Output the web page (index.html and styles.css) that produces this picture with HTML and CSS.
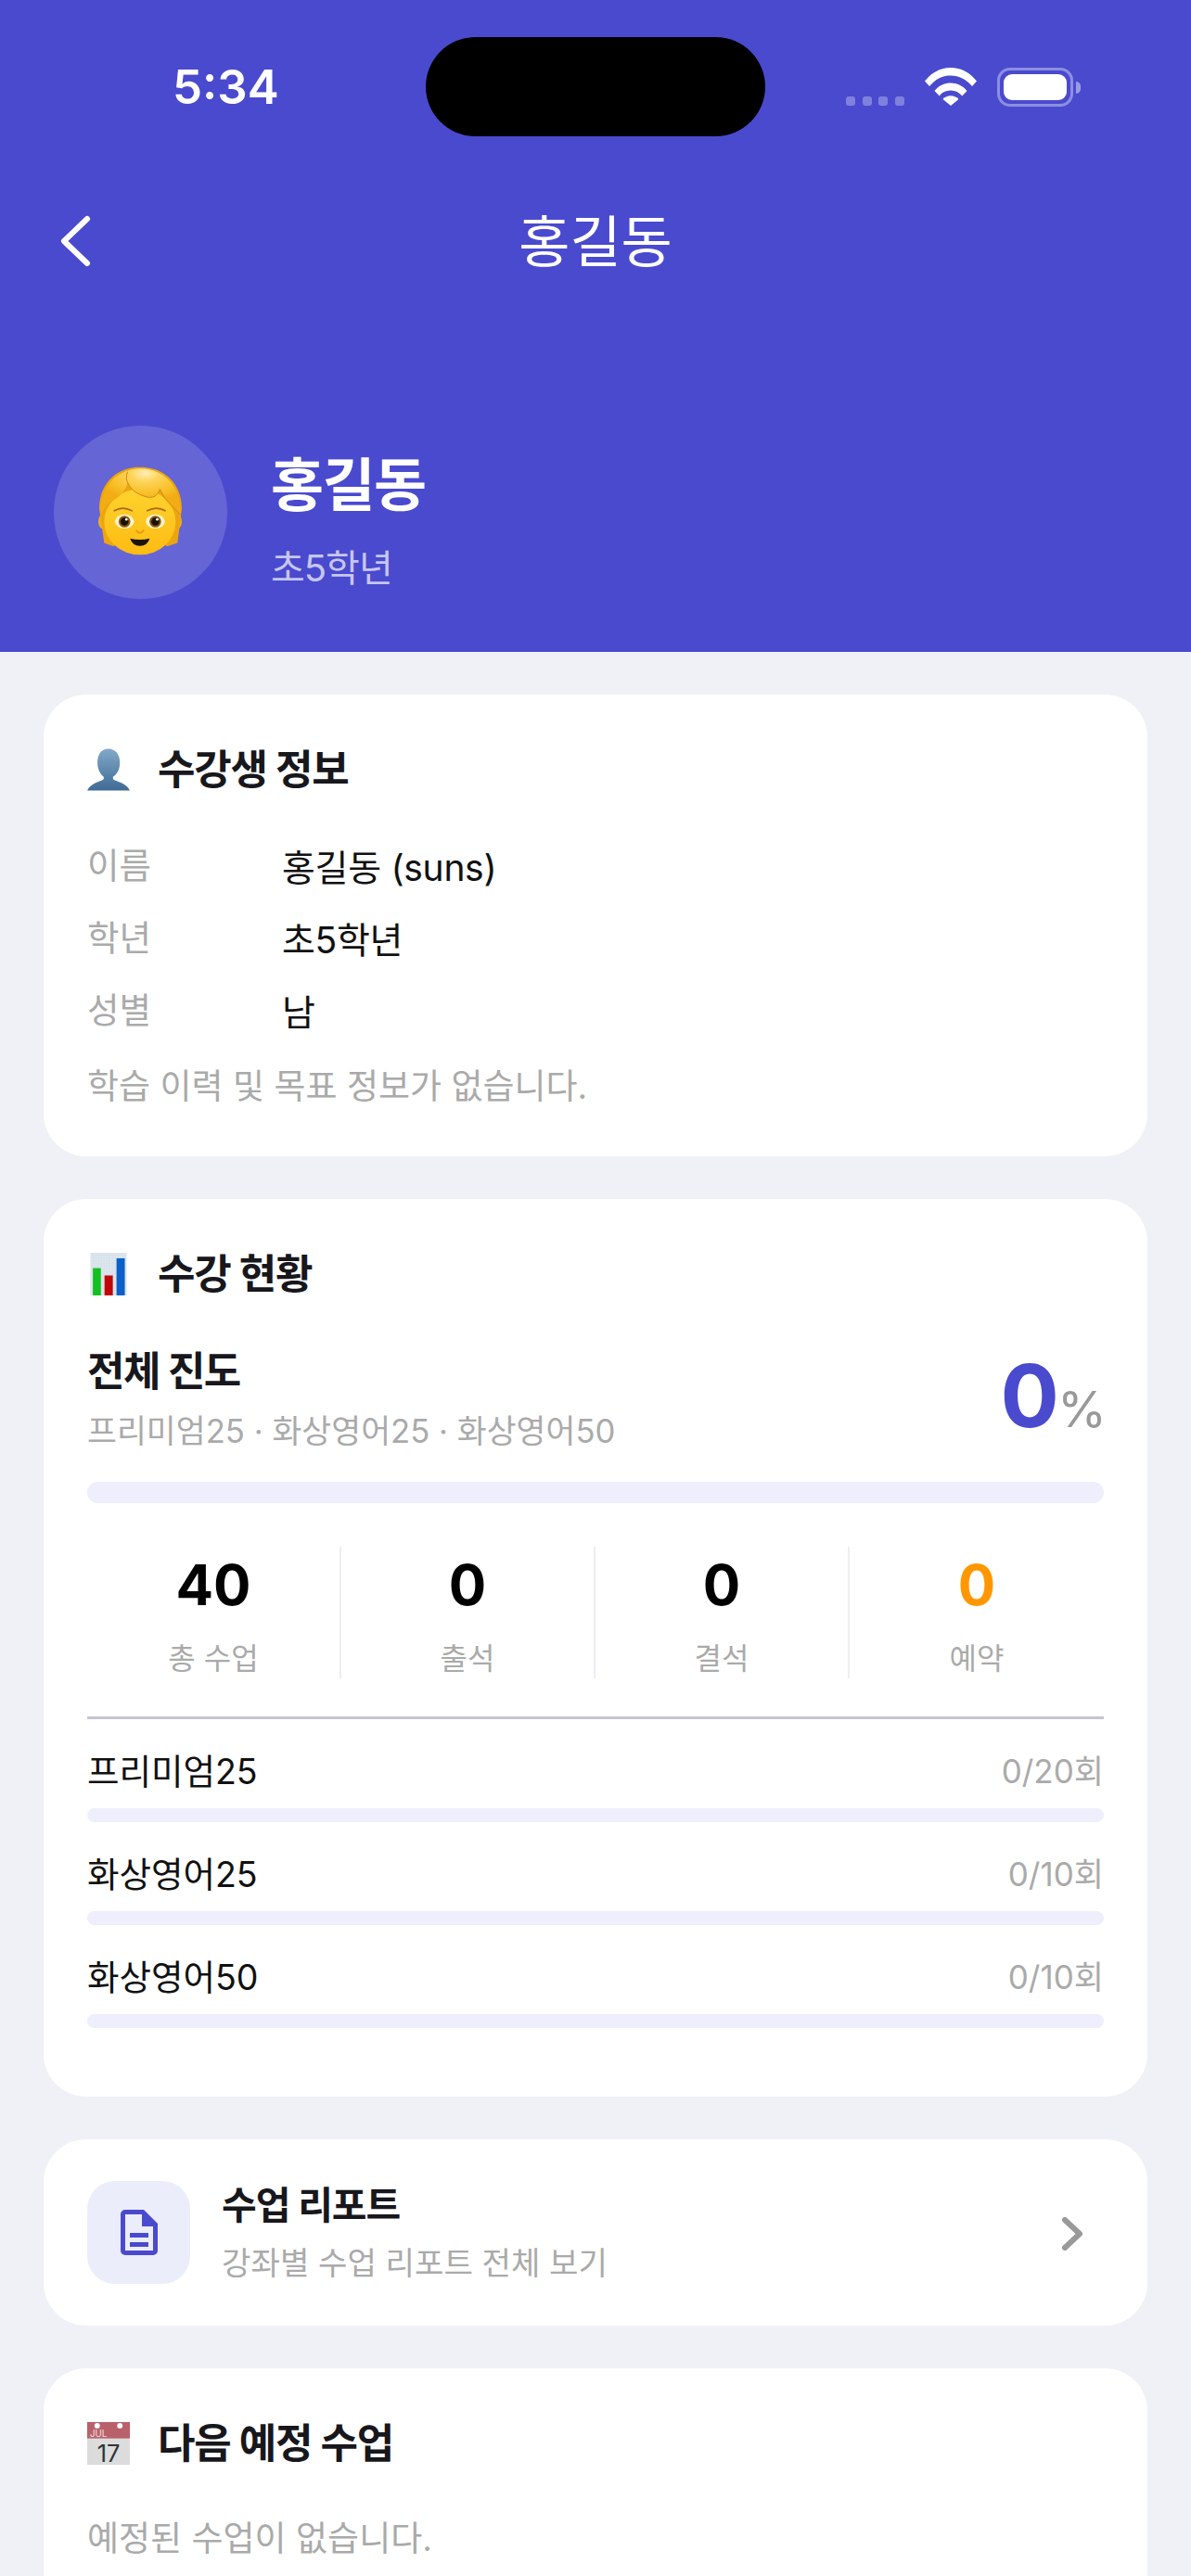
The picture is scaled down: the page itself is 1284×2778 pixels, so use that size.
FILE: index.html
```html
<!DOCTYPE html>
<html lang="ko">
<head>
    <meta charset="UTF-8">
    <meta name="viewport" content="width=device-width, initial-scale=1.0">
    <title>홍길동</title>
    <link rel="stylesheet" href="styles.css">
</head>
<body>
    <div class="screen">
        <header class="hero">
            <!-- Status bar -->
            <div class="status-bar">
                <span class="clock">5:34</span>
                <div class="island"></div>
                <div class="status-icons">
                    <div class="signal"><i></i><i></i><i></i><i></i></div>
                    <svg class="wifi" viewBox="0 0 56 41">
                        <path d="M0 14.500C7.500 5 17 0 28 0s20.500 5 28 14.500l-5 5.500C44.500 12.500 37 8.500 28 8.500S11.500 12.500 5 20z" fill="#fff"/>
                        <path d="M10.500 25C15 19.500 21 16.500 28 16.500s13 3 17.500 8.500l-5.200 5.500C37 26.500 33 24.500 28 24.500s-9 2-12.300 6z" fill="#fff"/>
                        <path d="M19.500 34c2.300-2.500 5.200-3.700 8.500-3.700s6.200 1.200 8.500 3.700L28 41z" fill="#fff"/>
                    </svg>
                    <div class="battery"><div class="battery-fill"></div></div>
                    <div class="battery-nub"></div>
                </div>
            </div>

            <!-- Nav -->
            <div class="nav">
                <svg class="back" viewBox="0 0 34 56">
                    <path d="M30 4 L5 28 L30 52" fill="none" stroke="#fff" stroke-width="6" stroke-linecap="round" stroke-linejoin="round"/>
                </svg>
                <h1 class="nav-title">홍길동</h1>
            </div>

            <!-- Profile -->
            <div class="profile">
                <div class="avatar">
                    <svg class="face" viewBox="200 185 280 295">
                        <defs>
                            <radialGradient id="hairGrad" cx="0.56" cy="0.1" r="0.62">
                                <stop offset="0" stop-color="#ffeeb4"/>
                                <stop offset="0.3" stop-color="#fdd45a"/>
                                <stop offset="0.7" stop-color="#f8c02a"/>
                                <stop offset="1" stop-color="#f2ac14"/>
                            </radialGradient>
                            <linearGradient id="skinGrad" x1="0" y1="0" x2="0" y2="1">
                                <stop offset="0" stop-color="#ffd22e"/>
                                <stop offset="1" stop-color="#fdbb12"/>
                            </linearGradient>
                        </defs>
                        <ellipse cx="217" cy="367" rx="14" ry="24" fill="#f4ae18"/>
                        <ellipse cx="460" cy="367" rx="14" ry="24" fill="#f4ae18"/>
                        <path d="M340 190C262 188 206 245 206 325L222 436 252 448 300 400H380L425 448 460 436 474 325C474 245 418 190 340 190Z" fill="#eda50f"/>
                        <ellipse cx="338" cy="368" rx="116" ry="107" fill="url(#skinGrad)"/>
                        <path d="M211 345C205 255 262 196 340 195C418 196 475 255 469 345C455 325 425 310 403 262C395 285 380 292 360 287C335 280 310 268 298 240C290 275 262 295 238 305C228 315 218 330 211 345Z" fill="url(#hairGrad)"/>
                        <path d="M298 205C292 222 294 232 298 240C310 268 335 280 360 287C380 292 395 285 403 262C425 310 455 325 469 345" fill="none" stroke="#c98a12" stroke-width="3"/>
                        <path d="M255 332Q282 316 312 332" fill="none" stroke="#a86a10" stroke-width="5" stroke-linecap="round"/>
                        <path d="M362 332Q392 316 420 332" fill="none" stroke="#a86a10" stroke-width="5" stroke-linecap="round"/>
                        <ellipse cx="288" cy="367" rx="31" ry="23" fill="#fff3cf"/>
                        <ellipse cx="388" cy="367" rx="31" ry="23" fill="#fff3cf"/>
                        <circle cx="288" cy="367" r="19" fill="#8a5a12"/>
                        <circle cx="388" cy="367" r="19" fill="#8a5a12"/>
                        <circle cx="288" cy="367" r="13" fill="#1a1205"/>
                        <circle cx="388" cy="367" r="13" fill="#1a1205"/>
                        <circle cx="294" cy="360" r="4" fill="#fff"/>
                        <circle cx="394" cy="360" r="4" fill="#fff"/>
                        <path d="M326 396Q338 412 350 396" fill="none" stroke="#e39410" stroke-width="5" stroke-linecap="round"/>
                        <path d="M306 422Q338 430 370 422Q362 446 338 446Q314 446 306 422Z" fill="#1b1208"/>
                    </svg>
                </div>
                <div class="profile-text">
                    <div class="profile-name">홍길동</div>
                    <div class="profile-grade">초5학년</div>
                </div>
            </div>
        </header>

        <main class="content">
            <!-- 수강생 정보 -->
            <section class="card card-info">
                <div class="card-title">
                    <svg class="title-icon" viewBox="105 88 137 134">
                        <defs>
                            <linearGradient id="bustGrad" x1="0" y1="0" x2="0" y2="1">
                                <stop offset="0" stop-color="#83a8c8"/>
                                <stop offset="1" stop-color="#3f6b96"/>
                            </linearGradient>
                        </defs>
                        <path d="M173 88C150 88 137 107 138 135C139 158 150 172 158 178V185C150 195 118 195 105 222H242C230 195 196 195 188 185V178C198 172 209 158 210 135C211 107 196 88 173 88Z" fill="url(#bustGrad)"/>
                    </svg>
                    <h2>수강생 정보</h2>
                </div>
                <div class="info-row"><span class="info-label">이름</span><span class="info-value">홍길동 (suns)</span></div>
                <div class="info-row"><span class="info-label">학년</span><span class="info-value">초5학년</span></div>
                <div class="info-row"><span class="info-label">성별</span><span class="info-value">남</span></div>
                <p class="empty-note">학습 이력 및 목표 정보가 없습니다.</p>
            </section>

            <!-- 수강 현황 -->
            <section class="card card-status">
                <div class="card-title">
                    <svg class="title-icon" viewBox="114 97 118 139">
                        <defs>
                            <pattern id="chartGrid" width="9" height="9" patternUnits="userSpaceOnUse">
                                <rect width="9" height="9" fill="#d5e0ea"/>
                                <path d="M0 0H9M0 0V9" stroke="#eef3f7" stroke-width="2"/>
                            </pattern>
                        </defs>
                        <rect x="114" y="97" width="118" height="139" fill="url(#chartGrid)"/>
                        <rect x="122" y="147" width="26" height="89" fill="#12c01e"/>
                        <rect x="160" y="171" width="27" height="65" fill="#c20606"/>
                        <rect x="199" y="115" width="27" height="121" fill="#0a5fc8"/>
                    </svg>
                    <h2>수강 현황</h2>
                </div>

                <div class="overall">
                    <div>
                        <div class="overall-title">전체 진도</div>
                        <div class="overall-sub">프리미엄25 · 화상영어25 · 화상영어50</div>
                    </div>
                    <div class="overall-pct"><span class="pct-num">0</span><span class="pct-sign">%</span></div>
                </div>
                <div class="bar bar-main"></div>

                <div class="stats">
                    <div class="stat"><div class="stat-num">40</div><div class="stat-label">총 수업</div></div>
                    <div class="stat"><div class="stat-num">0</div><div class="stat-label">출석</div></div>
                    <div class="stat"><div class="stat-num">0</div><div class="stat-label">결석</div></div>
                    <div class="stat"><div class="stat-num stat-orange">0</div><div class="stat-label">예약</div></div>
                </div>

                <div class="courses">
                    <div class="course">
                        <div class="course-head"><span>프리미엄25</span><span class="course-count">0/20회</span></div>
                        <div class="bar bar-small"></div>
                    </div>
                    <div class="course">
                        <div class="course-head"><span>화상영어25</span><span class="course-count">0/10회</span></div>
                        <div class="bar bar-small"></div>
                    </div>
                    <div class="course">
                        <div class="course-head"><span>화상영어50</span><span class="course-count">0/10회</span></div>
                        <div class="bar bar-small"></div>
                    </div>
                </div>
            </section>

            <!-- 수업 리포트 -->
            <section class="card card-report">
                <div class="report-icon">
                    <svg viewBox="0 0 40 50" width="40" height="50">
                        <path d="M5 0H25L40 15V44a5 5 0 0 1-5 5H5a5 5 0 0 1-5-5V5a5 5 0 0 1 5-5Z" fill="#4a4acf"/>
                        <path d="M5 5H23V18H35V44H5Z" fill="#ecedfa"/>
                        <rect x="10" y="25" width="20" height="5" fill="#4a4acf"/>
                        <rect x="10" y="35" width="20" height="5" fill="#4a4acf"/>
                    </svg>
                </div>
                <div class="report-text">
                    <div class="report-title">수업 리포트</div>
                    <div class="report-sub">강좌별 수업 리포트 전체 보기</div>
                </div>
                <svg class="report-arrow" viewBox="0 0 24 36">
                    <path d="M4 3 L20 18 L4 33" fill="none" stroke="#999" stroke-width="6" stroke-linecap="round" stroke-linejoin="round"/>
                </svg>
            </section>

            <!-- 다음 예정 수업 -->
            <section class="card card-next">
                <div class="card-title">
                    <svg class="title-icon" viewBox="0 0 47 47">
                        <rect y="17" width="47" height="30" fill="#dcdcdc"/>
                        <rect width="47" height="18" fill="#b9616a"/>
                        <circle cx="11" cy="4" r="3" fill="#fff"/>
                        <circle cx="36" cy="4" r="3" fill="#fff"/>
                        <text x="3" y="16" class="cal-month">JUL</text>
                        <text x="23.500" y="44" text-anchor="middle" class="cal-day">17</text>
                    </svg>
                    <h2>다음 예정 수업</h2>
                </div>
                <p class="empty-note">예정된 수업이 없습니다.</p>
            </section>
        </main>
    </div>
</body>
</html>
```

FILE: styles.css
```css
* {
    box-sizing: border-box;
}

html, body {
    margin: 0;
    padding: 0;
}

body {
    width: 1284px;
    height: 2778px;
    overflow: hidden;
    background: #f0f1f6;
    font-family: Inter, "Noto Sans CJK KR", sans-serif;
    color: #111;
}

.screen {
    width: 1284px;
    height: 2778px;
    overflow: hidden;
}

h1, h2, p {
    margin: 0;
    font-weight: inherit;
}

/* Purple header */
.hero {
    height: 703px;
    background: #4a4acf;
    color: #fff;
    padding-top: 40px;
}

.status-bar {
    height: 107px;
    display: flex;
    align-items: center;
    padding-left: 186px;
}

.clock {
    width: 273px;
    font-size: 51px;
    font-weight: 600;
}

.island {
    width: 366px;
    height: 107px;
    background: #000;
    border-radius: 54px;
}

.status-icons {
    display: flex;
    align-items: flex-start;
    height: 42px;
    margin-left: 87px;
}

.signal {
    display: flex;
    gap: 7.500px;
    margin-top: 31px;
}

.signal i {
    display: block;
    width: 10px;
    height: 10px;
    border-radius: 3px;
    background: rgba(255, 255, 255, 0.3);
}

.wifi {
    width: 56px;
    height: 41px;
    margin-left: 22px;
}

.battery {
    width: 82px;
    height: 42px;
    margin-left: 22px;
    padding: 4px;
    border: 3px solid rgba(255, 255, 255, 0.38);
    border-radius: 14px;
}

.battery-fill {
    height: 100%;
    background: #fff;
    border-radius: 9px;
}

.battery-nub {
    width: 5px;
    height: 13px;
    margin-left: 3px;
    margin-top: 15px;
    background: rgba(255, 255, 255, 0.45);
    border-radius: 0 5px 5px 0;
}

.nav {
    position: relative;
    height: 76px;
    margin-top: 71px;
    display: flex;
    align-items: center;
    justify-content: center;
}

.back {
    position: absolute;
    left: 64px;
    top: 14px;
    width: 34px;
    height: 56px;
}

.nav-title {
    font-size: 60px;
    font-weight: 400;
}

.profile {
    display: flex;
    align-items: center;
    margin-top: 165px;
    padding-left: 58px;
}

.avatar {
    width: 187px;
    height: 187px;
    border-radius: 50%;
    background: rgba(255, 255, 255, 0.15);
    display: flex;
    align-items: center;
    justify-content: center;
}

.face {
    width: 93px;
    height: 98px;
    margin-bottom: 3px;
}

.profile-text {
    margin-left: 47px;
    margin-top: 19px;
}

.profile-name {
    font-size: 62px;
    font-weight: 700;
    line-height: 76px;
    letter-spacing: -1.500px;
}

.profile-grade {
    font-size: 40px;
    line-height: 52px;
    margin-top: 25px;
    color: rgba(255, 255, 255, 0.7);
    letter-spacing: -1px;
}

/* Cards */
.content {
    display: flex;
    flex-direction: column;
    gap: 46px;
    padding: 46px 47px 0;
}

.card {
    background: #fff;
    border-radius: 46px;
    padding: 0 47px;
}

.card-info {
    height: 498px;
    padding-top: 49px;
}

.card-status {
    height: 968px;
    padding-top: 49px;
}

.card-report {
    height: 201px;
    display: flex;
    align-items: center;
}

.card-next {
    padding-top: 49px;
    height: 320px;
}

.card-title {
    display: flex;
    align-items: center;
    height: 58px;
}

.card-title h2 {
    font-size: 44px;
    font-weight: 700;
    letter-spacing: -1.200px;
    margin-left: 30px;
    color: #17171c;
}

.title-icon {
    width: 46px;
    height: 46px;
    flex-shrink: 0;
    margin-top: 6px;
}

.info-row {
    display: flex;
    align-items: center;
    height: 78px;
    font-size: 39px;
}

.card-title + .info-row {
    margin-top: 36px;
}

.info-label {
    width: 210px;
    color: #aaa;
    font-size: 37.500px;
    margin-top: -2px;
}

.info-value {
    color: #111;
    letter-spacing: -0.300px;
    margin-top: 3px;
}

.empty-note {
    font-size: 37px;
    color: #aaa;
    line-height: 50px;
}

.card-info .empty-note {
    margin-top: 21px;
}

.card-next .empty-note {
    margin-top: 52px;
}

.overall {
    display: flex;
    justify-content: space-between;
    margin-top: 50px;
}

.overall-title {
    font-size: 44px;
    font-weight: 700;
    line-height: 58px;
    letter-spacing: -1.500px;
    color: #17171c;
}

.overall-sub {
    font-size: 34.700px;
    line-height: 46px;
    margin-top: 12px;
    color: #aaa;
}

.overall-pct {
    display: flex;
    align-items: baseline;
    margin-top: -3px;
    margin-right: -3px;
}

.pct-num {
    font-size: 94px;
    font-weight: 700;
    color: #4a4acf;
    line-height: 116px;
}

.pct-sign {
    font-size: 54px;
    color: #999;
    margin-left: -2px;
}

.bar {
    background: #eeeefc;
}

.bar-main {
    height: 23px;
    border-radius: 12px;
    margin-top: 32px;
}

.stats {
    display: grid;
    grid-template-columns: repeat(4, 1fr);
    margin-top: 47px;
    padding-bottom: 41px;
    border-bottom: 3px solid #c4c6d0;
}

.stat {
    height: 142px;
    text-align: center;
    border-right: 2px solid #eeeef2;
}

.stat:last-child {
    border-right: none;
}

.stat-num {
    font-size: 60px;
    font-weight: 700;
    line-height: 76px;
    margin-top: 3px;
    color: #000;
}

.stat-orange {
    color: #ff9800;
}

.stat-label {
    font-size: 32px;
    color: #aaa;
    line-height: 44px;
    margin-top: 20px;
}

.courses {
    margin-top: 28px;
}

.course {
    margin-bottom: 28px;
}

.course-head {
    display: flex;
    justify-content: space-between;
    align-items: center;
    font-size: 37.500px;
    height: 50px;
}

.course-count {
    color: #aaa;
    font-size: 35px;
}

.bar-small {
    height: 15px;
    border-radius: 8px;
    margin-top: 18px;
}

/* Report card */
.report-icon {
    width: 111px;
    height: 111px;
    border-radius: 30px;
    background: #ecedfa;
    display: flex;
    align-items: center;
    justify-content: center;
    flex-shrink: 0;
}

.report-text {
    flex: 1;
    margin-left: 34px;
}

.report-title {
    font-size: 41px;
    font-weight: 700;
    line-height: 54px;
    letter-spacing: -1px;
    color: #17171c;
}

.report-sub {
    font-size: 34.200px;
    line-height: 46px;
    margin-top: 13px;
    color: #aaa;
}

.report-arrow {
    width: 24px;
    height: 36px;
    margin-right: 22px;
    margin-top: 3px;
}

.cal-month {
    font-family: Inter, sans-serif;
    font-size: 10px;
    fill: #f2e2e2;
}

.cal-day {
    font-family: Inter, sans-serif;
    font-size: 26px;
    fill: #333;
}
```
